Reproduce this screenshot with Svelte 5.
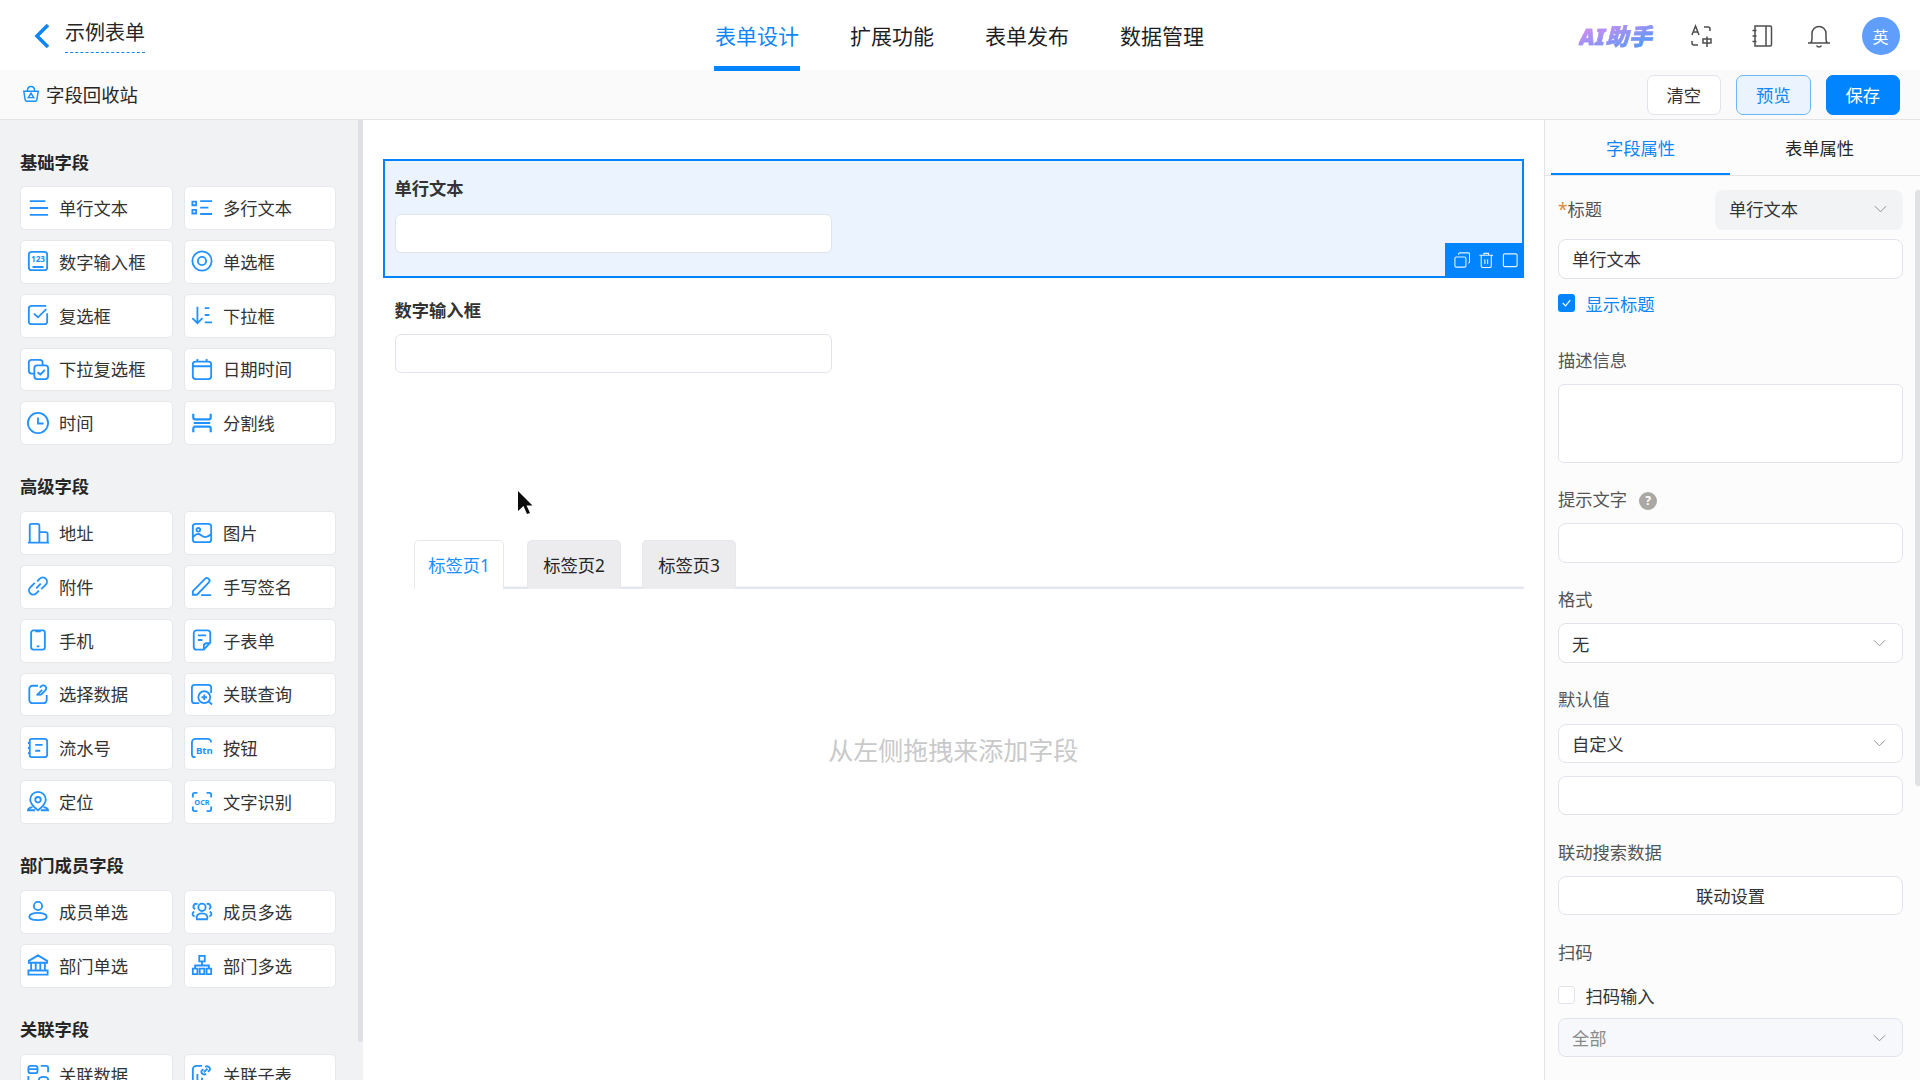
<script>
  // icons: 24x24 stroke paths, optional small label drawn as real text
  const icons = {
    line: { d: 'M3 4.500h17M3 12h20M3 19.500h20' },
    multi: { d: 'M1.500 5h4v4h-4zM1.500 14h4v4h-4zM10 4.500h13M10 11.500h9M10 18.500h13' },
    num: { d: 'M5 2h14a3 3 0 0 1 3 3v14a3 3 0 0 1-3 3H5a3 3 0 0 1-3-3V5a3 3 0 0 1 3-3zM6 18.500h12', txt: '123', tx: 12, ty: 13.500, ts: 9 },
    radio: { d: 'M12 1.500a10.500 10.500 0 1 0 0 21a10.500 10.500 0 0 0 0-21zM12 7.500a4.500 4.500 0 1 0 0 9a4.500 4.500 0 0 0 0-9z' },
    check: { d: 'M22 10v9a3 3 0 0 1-3 3H5a3 3 0 0 1-3-3V5a3 3 0 0 1 3-3h16M7.500 10.500l4.500 4l9-9' },
    drop: { d: 'M7 3v18M1.500 15.500L7 21l5.500-5.500M15 4.500h5M15 12h5M15 20h8' },
    dropcheck: { d: 'M9 17H5a3 3 0 0 1-3-3V5a3 3 0 0 1 3-3h9a3 3 0 0 1 3 3v3M11 8h9a3 3 0 0 1 3 3v9a3 3 0 0 1-3 3h-9a3 3 0 0 1-3-3v-9a3 3 0 0 1 3-3zM11.500 15.500l3 2.500l5-5' },
    date: { d: 'M5 4h14a3 3 0 0 1 3 3v13a3 3 0 0 1-3 3H5a3 3 0 0 1-3-3V7a3 3 0 0 1 3-3zM7 1v4M17 1v4M2 9h20' },
    time: { d: 'M12 1a11 11 0 1 0 0 22a11 11 0 0 0 0-22zM12 6v6.500h6' },
    divider: { d: 'M2.500 2v4a2 2 0 0 0 2 2h15a2 2 0 0 0 2-2V2M2.500 22v-4a2 2 0 0 1 2-2h15a2 2 0 0 1 2 2v4M3 12h18', w: 2.400 },
    addr: { d: 'M1 22.500h23M3 22V3.500a1.500 1.500 0 0 1 1.500-1.500h7a2 2 0 0 1 2 2v18M13.500 11h7a2 2 0 0 1 2 2v9' },
    image: { d: 'M5 2h14a3 3 0 0 1 3 3v14a3 3 0 0 1-3 3H5a3 3 0 0 1-3-3V5a3 3 0 0 1 3-3zM2 17c3-4 6-5 9-2.500s7 3 11-1.500M8 6.500a2 2 0 1 0 0 4a2 2 0 0 0 0-4z' },
    attach: { d: 'M10 14.500l5-5M8.500 8.500l-5 5a4.500 4.500 0 0 0 6.500 6.500l3-3M15.500 15.500l5-5a4.500 4.500 0 0 0-6.500-6.500l-3 3' },
    sign: { d: 'M2 17.500L15.500 4a2.500 2.500 0 0 1 3.500 0l.500.500a2.500 2.500 0 0 1 0 3.500L6.500 21.500H2zM11 22h11' },
    phone: { d: 'M7 1.500h10a2.500 2.500 0 0 1 2.500 2.500v16a2.500 2.500 0 0 1-2.500 2.500H7A2.500 2.500 0 0 1 4.500 20V4A2.500 2.500 0 0 1 7 1.500zM9 2.500h6M10.500 19h3' },
    sub: { d: 'M14 22.500H6a3 3 0 0 1-3-3v-15a3 3 0 0 1 3-3h12a3 3 0 0 1 3 3v10.500zM7.500 7h9M7.500 12h5M14 22.500v-4a3 3 0 0 1 3-3h4' },
    pick: { d: 'M12 3H6a3.500 3.500 0 0 0-3.500 3.500v12A3.500 3.500 0 0 0 6 22h12a3.500 3.500 0 0 0 3.500-3.500V13M10.500 13.500l6-6M14 5l1.500-1.500a3 3 0 0 1 4.500 4.500l-4 4a3 3 0 0 1-4 0' },
    query: { d: 'M9 22H4a3 3 0 0 1-3-3V5a3 3 0 0 1 3-3h15a3 3 0 0 1 3 3v6M14.500 9a6.500 6.500 0 1 0 0 13a6.500 6.500 0 0 0 0-13zM19.500 20.500l3.500 3M14.500 12.500v6M11.500 15.500h6' },
    serial: { d: 'M5 2h14a3 3 0 0 1 3 3v14a3 3 0 0 1-3 3H5a2 2 0 0 1-2-2V4a2 2 0 0 1 2-2zM1 6.500h3M1 12h3M1 17.500h3M9 8.500h8M9 15h5.500' },
    btn: { d: 'M22 6a4 4 0 0 0-4-4H5a4 4 0 0 0-4 4v13a3 3 0 0 0 3 3h1', txt: 'Btn', tx: 14.500, ty: 18.500, ts: 10.500 },
    loc: { d: 'M12 1a8.500 8.500 0 0 0-8.500 8.500c0 4.500 4 8 8.500 11.500c4.500-3.500 8.500-7 8.500-11.500A8.500 8.500 0 0 0 12 1zM12 6.500a3 3 0 1 0 0 6a3 3 0 0 0 0-6zM6 17.500c-3 .500-5 2-5 3.500h8M18 17.500c3 .500 5 2 5 3.500h-8' },
    ocr: { d: 'M2 7V4a2 2 0 0 1 2-2h3M17 2h3a2 2 0 0 1 2 2v3M2 17v3a2 2 0 0 0 2 2h3M17 22h3a2 2 0 0 0 2-2v-3', txt: 'OCR', tx: 12, ty: 15, ts: 8 },
    user: { d: 'M12 2a4.500 4.500 0 1 0 0 9a4.500 4.500 0 0 0 0-9zM12 14c-5.500 0-9.500 1.800-9.500 4.300S6.500 22 12 22s9.500-1.200 9.500-3.700S17.500 14 12 14z' },
    users: { d: 'M12 4a4 4 0 1 0 0 8a4 4 0 0 0 0-8zM6.500 21c-1.500-3.500 1-6.500 5.500-6.500s7 3 5.500 6.500zM7 4.500a3 3 0 0 0-2.500 5.500M17 4.500a3 3 0 0 1 2.500 5.500M4 18C1.500 17 .500 14.500 3.500 12.500M20 18c2.500-1 3.500-3.500.500-5.500' },
    bank: { d: 'M12 1.500L2 7.500v2h20v-2zM4.500 10v8M9.500 10v8M14.500 10v8M19.500 10v8M1.500 18h21v4.500h-21z' },
    org: { d: 'M9 2h6v6H9zM12 8v4M4.500 16v-3.500h15V16M2 16h5v6H2zM9.500 16h5v6h-5zM17 16h5v6h-5z' },
    rel: { d: 'M9 2H4a2.500 2.500 0 0 0-2.500 2.500v3A2.500 2.500 0 0 0 4 10h5a2.500 2.500 0 0 0 2.500-2.500v-3A2.500 2.500 0 0 0 9 2zM2 5.500h9M15 2h6a2 2 0 0 1 2 2v5M1.500 13v7a2 2 0 0 0 2 2h4M13 17c0-2 2-3 5-3s5 1 5 3v4c0 1.500-2 2.500-5 2.500s-5-1-5-2.500z' },
    relsub: { d: 'M12 2H6a4 4 0 0 0-4 4v16M7 22V11M12 22v-7M17 22v-4M14 9l4-4M15.500 3.500a3 3 0 0 1 5 3l-2 2M16.500 10.500a3 3 0 0 1-5-3l2-2' }
  }

  const sections = [
    { title: '基础字段', items: [['单行文本', 'line'], ['多行文本', 'multi'], ['数字输入框', 'num'], ['单选框', 'radio'], ['复选框', 'check'], ['下拉框', 'drop'], ['下拉复选框', 'dropcheck'], ['日期时间', 'date'], ['时间', 'time'], ['分割线', 'divider']] },
    { title: '高级字段', items: [['地址', 'addr'], ['图片', 'image'], ['附件', 'attach'], ['手写签名', 'sign'], ['手机', 'phone'], ['子表单', 'sub'], ['选择数据', 'pick'], ['关联查询', 'query'], ['流水号', 'serial'], ['按钮', 'btn'], ['定位', 'loc'], ['文字识别', 'ocr']] },
    { title: '部门成员字段', items: [['成员单选', 'user'], ['成员多选', 'users'], ['部门单选', 'bank'], ['部门多选', 'org']] },
    { title: '关联字段', items: [['关联数据', 'rel'], ['关联子表', 'relsub']] }
  ]

  const nav = ['表单设计', '扩展功能', '表单发布', '数据管理']
  const tabs = ['标签页1', '标签页2', '标签页3']
</script>

{#snippet chevron()}
  <svg class="chev" viewBox="0 0 14 8"><path d="M1 1l6 6l6-6" /></svg>
{/snippet}

<div class="page">
  <header class="top">
    <div class="title">
      <svg class="back" viewBox="0 0 18 26"><path d="M15 2L4 13l11 11" /></svg>
      <span class="name">示例表单</span>
    </div>
    <nav class="nav">
      {#each nav as n, i}
        <span class="nav-item" class:active={i === 0}>{n}</span>
      {/each}
    </nav>
    <div class="tools">
      <span class="ai">AI助手</span>
      <svg class="tool t1" viewBox="0 0 24 24">
        <path d="M15 3h4a2 2 0 0 1 2 2v2M9 21H5a2 2 0 0 1-2-2v-2" />
        <path d="M14 15h8v4h-8zM18 12.500V23M3 11l3.500-9l3.500 9M4.300 8h4.400" stroke-width="1.600" />
      </svg>
      <svg class="tool t2" viewBox="0 0 24 24">
        <path d="M5 2h15a1.500 1.500 0 0 1 1.500 1.500v17A1.500 1.500 0 0 1 20 22H5zM16 2v20M2.500 6.500h4M2.500 12h4M2.500 17.500h4" />
      </svg>
      <svg class="tool t3" viewBox="0 0 24 24">
        <path d="M1 19h22M3.500 19c1-1 1.500-2.500 1.500-4V9.500a7 7 0 0 1 14 0V15c0 1.500.5 3 1.500 4M9.500 21.500a2.800 2.800 0 0 0 5 0" />
      </svg>
      <span class="avatar">英</span>
    </div>
  </header>

  <div class="bar">
    <div class="recycle">
      <svg viewBox="0 0 20 20"><path d="M2 7h16l-1.500 9.500a2 2 0 0 1-2 1.500h-9a2 2 0 0 1-2-1.500zM6 7c0-7 8-7 8 0M10 9l3 5H7z" /></svg>
      <span>字段回收站</span>
    </div>
    <div class="actions">
      <button class="btn">清空</button>
      <button class="btn preview">预览</button>
      <button class="btn save">保存</button>
    </div>
  </div>

  <div class="body">
    <aside class="left">
      <div class="left-scroll">
        {#each sections as s}
          <section class="group">
            <h4>{s.title}</h4>
            <div class="grid">
              {#each s.items as [label, ic]}
                {@const icon = icons[ic]}
                <div class="item">
                  <svg class="ico" viewBox="0 0 24 24">
                    <path d={icon.d} stroke-width={icon.w || 2} />
                    {#if icon.txt}
                      <text x={icon.tx} y={icon.ty} font-size={icon.ts}>{icon.txt}</text>
                    {/if}
                  </svg>
                  <span>{label}</span>
                </div>
              {/each}
            </div>
          </section>
        {/each}
      </div>
      <div class="rail"></div>
    </aside>

    <main class="canvas">
      <div class="field selected">
        <div class="f-label">单行文本</div>
        <div class="f-input"></div>
        <div class="f-actions">
          <svg viewBox="0 0 18 18"><path d="M2.500 5.500h9a1.500 1.500 0 0 1 1.500 1.500v8a1.500 1.500 0 0 1-1.500 1.500h-9A1.500 1.500 0 0 1 1 15V7a1.500 1.500 0 0 1 1.500-1.500zM5 3V2.500A1.500 1.500 0 0 1 6.500 1h9A1.500 1.500 0 0 1 17 2.500v8a1.500 1.500 0 0 1-1.500 1.500" /></svg>
          <svg viewBox="0 0 18 18"><path d="M1.500 3.500h15M6.500 3.500V1.500h5v2M3.500 4v11a2 2 0 0 0 2 2h7a2 2 0 0 0 2-2V4M7.500 8v5M10.500 8v5" /></svg>
          <svg viewBox="0 0 18 18"><path d="M3 2h12a1.500 1.500 0 0 1 1.500 1.500v11A1.500 1.500 0 0 1 15 16H3a1.500 1.500 0 0 1-1.500-1.500v-11A1.500 1.500 0 0 1 3 2z" /></svg>
        </div>
      </div>
      <div class="field plain">
        <div class="f-label">数字输入框</div>
        <div class="f-input"></div>
      </div>

      <div class="tabs">
        {#each tabs as t, i}
          <div class="tab" class:on={i === 0}>{t}</div>
        {/each}
      </div>
      <div class="hint">从左侧拖拽来添加字段</div>

      <svg class="cursor" viewBox="0 0 15 23"><path d="M0 0l14.500 14.500h-6l3.500 7.500l-3 1l-3.500-8L0 20z" /></svg>
    </main>

    <aside class="right">
      <div class="r-tabs">
        <span class="r-tab on">字段属性</span>
        <span class="r-tab">表单属性</span>
      </div>
      <div class="r-main">
        <div class="form">
          <div class="title-row">
            <span class="lbl"><i>*</i>标题</span>
            <div class="type">单行文本 {@render chevron()}</div>
          </div>
          <div class="box val">单行文本</div>
          <div class="check-row on">
            <span class="cb">
              <svg viewBox="0 0 18 18"><path d="M5 9l3 3l5-6" /></svg>
            </span>
            显示标题
          </div>

          <div class="lbl gap desc-gap">描述信息</div>
          <div class="box area"></div>

          <div class="lbl gap">提示文字 <span class="help">?</span></div>
          <div class="box"></div>

          <div class="lbl gap">格式</div>
          <div class="box val sel">无 {@render chevron()}</div>

          <div class="lbl gap">默认值</div>
          <div class="box val sel">自定义 {@render chevron()}</div>
          <div class="box second"></div>

          <div class="lbl gap">联动搜索数据</div>
          <div class="box link">联动设置</div>

          <div class="lbl gap">扫码</div>
          <div class="check-row scan"><span class="cb off"></span>扫码输入</div>
          <div class="box val sel disabled">全部 {@render chevron()}</div>
        </div>
        <div class="rail r-rail"></div>
      </div>
    </aside>
  </div>
</div>

<style>
  :global(body) { margin: 0; overflow: hidden; }
  .page {
    width: 1920px; height: 1080px; display: flex; flex-direction: column; overflow: hidden;
    font-family: "Noto Sans", "Noto Sans CJK SC", sans-serif; color: #262626; background: #fff;
  }

  .top { height: 70px; flex: none; display: grid; grid-template-columns: 714px auto 1fr; background: #fff; position: relative; z-index: 1; }
  .title { display: flex; align-items: center; padding-left: 33px; }
  .back { width: 18px; height: 26px; margin-top: 0; }
  .back path { fill: none; stroke: #0f86f5; stroke-width: 3.600; }
  .name { margin-left: 14px; font-size: 20px; line-height: 28px; padding-bottom: 5px; border-bottom: 1px dashed #0f86f5; margin-top: 0; }
  .nav { display: flex; gap: 49px; }
  .nav-item { font-size: 21px; line-height: 72px; height: 71px; color: #1f1f1f; padding: 0 1px; box-sizing: border-box; }
  .nav-item.active { color: #0f86f5; border-bottom: 5px solid #0084ff; }
  .tools { display: flex; align-items: center; justify-content: flex-end; padding-right: 20.500px; }
  .ai {
    font-size: 23px; font-weight: 900; font-style: italic; line-height: 28px; margin-right: 36px; letter-spacing: .5px;
    background: linear-gradient(160deg, #d98cf0 15%, #4f9bf8 85%);
    -webkit-background-clip: text; background-clip: text; color: transparent; -webkit-text-stroke: .5px rgba(150, 140, 245, .8);
  }
  .tool { width: 24px; height: 24px; }
  .tool path { fill: none; stroke: #4d4d4d; stroke-width: 1.500; }
  .t2 { margin-left: 37px; }
  .t3 { margin-left: 33px; }
  .avatar {
    width: 38px; height: 38px; margin-left: 31px; border-radius: 50%; background: #5f9ffb; color: #fff;
    display: flex; align-items: center; justify-content: center; font-size: 16px;
  }

  .bar {
    height: 49px; flex: none; display: flex; align-items: center; justify-content: space-between;
    background: #fafafa; border-bottom: 1px solid #e4e4e4; padding: 0 20px 0 22px;
  }
  .recycle { display: flex; align-items: center; gap: 6px; font-size: 18.400px; margin-top: -2px; }
  .recycle svg { width: 18px; height: 18px; }
  .recycle path { fill: none; stroke: #1890ff; stroke-width: 1.600; }
  .actions { display: flex; gap: 15px; }
  .btn {
    width: 74.500px; height: 40px; border-radius: 7px; border: 1px solid #e1e4ec; background: #fff; padding: 0;
    font: inherit; font-size: 17.300px; color: #333;
  }
  .preview { background: #ebf4fe; border-color: #6cb6fa; color: #0f86f5; }
  .save { background: #0084ff; border-color: #0084ff; color: #fff; }

  .body { flex: 1; display: flex; min-height: 0; }

  .left { width: 362.500px; flex: none; display: flex; background: #f1f2f4; }
  .left-scroll { flex: 1; padding: 32.500px 0 0 20px; overflow: hidden; }
  .rail { width: 5px; height: 922px; background: #dfe0e3; border-radius: 0 0 3px 3px; flex: none; }
  .group { margin-bottom: 32.300px; }
  h4 { margin: 0 0 13.700px; font-size: 17.300px; line-height: 20px; font-weight: 700; color: #262626; }
  .grid { display: grid; grid-template-columns: 152.500px 152px; column-gap: 11.500px; row-gap: 10px; }
  .item {
    height: 43.800px; box-sizing: border-box; border: 1px solid #e7e8eb; border-radius: 5px; background: #fff;
    display: flex; align-items: center; padding: 0 0 1px 6px; font-size: 17.300px; color: #333;
  }
  .ico { width: 22px; height: 22px; margin-right: 10px; flex: none; }
  .ico path { fill: none; stroke: #2392ff; }
  .ico text { fill: #2392ff; text-anchor: middle; font-weight: 700; font-family: "Noto Sans", sans-serif; }

  .canvas { position: relative; flex: 1; min-width: 0; padding: 39px 20px 0; background: #fff; }
  .field { padding: 0 12px; }
  .selected {
    position: relative; height: 118.500px; box-sizing: border-box; padding: 16px 10px 0;
    border: 2px solid #0084ff; background: #ebf4fe;
  }
  .plain { padding-top: 21px; }
  .f-label { font-size: 17.300px; line-height: 24px; font-weight: 700; color: #333; }
  .f-input { width: 437px; height: 39.500px; box-sizing: border-box; margin-top: 12.600px; background: #fff; border: 1px solid #e1e4ec; border-radius: 6px; }
  .plain .f-input { margin-top: 11px; }
  .f-actions {
    position: absolute; right: -2px; bottom: -2px; width: 79px; height: 35px; background: #0084ff;
    display: flex; align-items: center; gap: 7.500px; padding-left: 8.500px; box-sizing: border-box;
  }
  .f-actions svg { width: 16.500px; height: 16.500px; }
  .f-actions path { fill: none; stroke: #fff; stroke-width: 1.200; opacity: .9; }

  .tabs { display: flex; height: 49px; margin: 166.500px 0 0 31.500px; box-shadow: inset 0 -2.500px 0 #e4e7ed; }
  .tab {
    width: 94px; margin-left: 21px; box-sizing: border-box; border: 1px solid #e6e8ee; border-bottom: 0; border-radius: 5px 5px 0 0;
    background: #ececee; font-size: 17.300px; line-height: 50px; text-align: center; color: #262626;
  }
  .tab.on { width: 90px; margin-left: 0; margin-right: 2px; background: #fff; color: #1890ff; }
  .hint { margin-top: 143.500px; text-align: center; font-size: 25px; line-height: 36px; color: #c9c9c9; }
  .cursor { position: absolute; left: 155px; top: 371px; width: 15px; height: 23px; }
  .cursor path { fill: #0b0b0b; }

  .right { width: 376px; flex: none; border-left: 1px solid #e4e4e4; background: #fcfcfc; display: flex; flex-direction: column; box-sizing: border-box; }
  .r-tabs { height: 56px; flex: none; box-sizing: border-box; border-bottom: 1px solid #e4e4e4; display: flex; padding-left: 6px; }
  .r-tab { width: 179px; text-align: center; font-size: 17.300px; line-height: 57px; height: 55px; box-sizing: border-box; color: #262626; }
  .r-tab.on { color: #0f86f5; border-bottom: 2.500px solid #0084ff; }
  .r-main { flex: 1; display: flex; min-height: 0; }
  .form { width: 345px; margin-left: 13px; padding-top: 13.500px; font-size: 17.300px; }
  .r-rail { margin: 13.500px 0 0 12px; height: 596px; background: #e1e2e4; border-radius: 3px 0 0 3px; }

  .title-row { display: flex; justify-content: space-between; align-items: center; }
  .lbl { font-size: 17.300px; line-height: 24px; color: #555; display: block; }
  .lbl i { color: #d98a3a; font-style: normal; }
  .gap { margin: 25.500px 0 11.300px; }
  .desc-gap { margin-top: 36.500px; }
  .type {
    width: 188px; height: 40px; box-sizing: border-box; padding: 0 14px 2px 14px; border-radius: 8px; background: #f2f3f5;
    display: flex; align-items: center; justify-content: space-between; color: #333; font-size: 17.300px;
  }
  .chev { width: 13px; height: 8px; flex: none; margin-right: 2px; }
  .chev path { fill: none; stroke: #8a8a8a; stroke-width: 1; }
  .box { height: 39.500px; box-sizing: border-box; border: 1px solid #e1e4ec; border-radius: 8px; background: #fff; }
  .val { padding: 0 13px; display: flex; align-items: center; color: #333; }
  .title-row + .box { margin-top: 9.500px; padding-bottom: 2px; height: 40px; }
  .sel { justify-content: space-between; padding-right: 14px; }
  .area { height: 79px; border-radius: 6px; }
  .area + .gap { margin-top: 25px; }
  .second { margin-top: 12.500px; }
  .link { display: flex; align-items: center; justify-content: center; color: #333; }
  .disabled { background: #f7f8fb; color: #8a8a8a; }
  .check-row { display: flex; align-items: center; gap: 10.500px; height: 18px; margin-top: 15px; font-size: 17.300px; color: #333; }
  .check-row.on { color: #0f86f5; }
  .scan { margin-bottom: 13.500px; }
  .gap + .scan { margin-top: 21.300px; }
  .cb { width: 17px; height: 18px; box-sizing: border-box; border-radius: 3px; background: #0084ff; flex: none; display: block; }
  .cb svg { display: block; width: 17px; height: 18px; }
  .cb path { fill: none; stroke: #fff; stroke-width: 1.200; }
  .cb.off { background: #fff; border: 1px solid #e1e4ec; }
  .help {
    display: inline-flex; align-items: center; justify-content: center; width: 18px; height: 18px; margin-left: 7.500px;
    border-radius: 50%; background: #aaa8a3; color: #fff; font-size: 12px; font-weight: 700; vertical-align: 1px; line-height: 18px;
  }
</style>
